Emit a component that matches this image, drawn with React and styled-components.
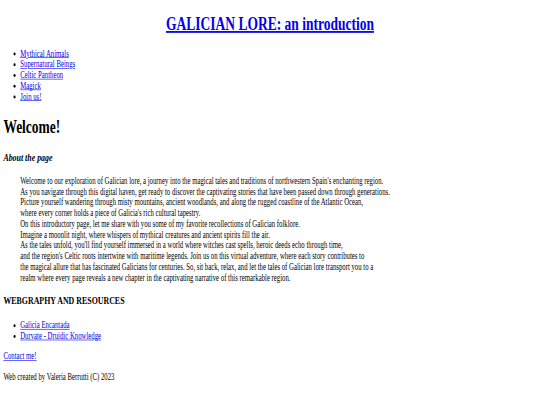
import React from 'react';
import styled, { createGlobalStyle } from 'styled-components';

//Global
const GlobalStyle = createGlobalStyle`
  html, body {
    margin: 0;
    padding: 0;
    overflow: hidden;
    background: #ffffff;
  }
`;

// the reference is a 1280px wide page squeezed into 540x405
const Viewport = styled.div`
  width: 540px;
  height: 405px;
  overflow: hidden;
`;

const Canvas = styled.div`
  display: flow-root;
  width: 1280px;
  min-height: 678px;
  transform: scale(0.421875, 0.597);
  transform-origin: 0 0;
  font-family: 'Liberation Serif', 'Times New Roman', serif;
  font-size: 16px;
  color: #000000;
`;

const PageBody = styled.div`
  margin: 8px;
`;

const Title = styled.h1`
  margin: 21.44px 0 23px;
  font-size: 32px;
  font-weight: bold;
  text-align: center;
`;

const Link = styled.a`
  color: #0000ee;
  text-decoration: underline;
`;

const LinkList = styled.ul`
  margin: ${(props) => props.top || '16px'} 0 16px;
  padding-left: 40px;
  list-style: disc;
`;

const Heading = styled.h1`
  margin: 21.44px 0;
  font-size: 32px;
  font-weight: bold;
`;

const SubHeading = styled.h3`
  margin: ${(props) => props.top || '18.72px'} 0 18.72px;
  font-size: 18.72px;
  font-weight: bold;
  font-style: ${(props) => (props.italic ? 'italic' : 'normal')};
`;

const Intro = styled.p`
  margin: 16px 40px;
`;

const Paragraph = styled.p`
  margin: 16px 0;
`;

const introLines = [
  "Welcome to our exploration of Galician lore, a journey into the magical tales and traditions of northwestern Spain's enchanting region.",
  'As you navigate through this digital haven, get ready to discover the captivating stories that have been passed down through generations.',
  'Picture yourself wandering through misty mountains, ancient woodlands, and along the rugged coastline of the Atlantic Ocean,',
  "where every corner holds a piece of Galicia's rich cultural tapestry.",
  'On this introductory page, let me share with you some of my favorite recollections of Galician folklore.',
  'Imagine a moonlit night, where whispers of mythical creatures and ancient spirits fill the air.',
  "As the tales unfold, you'll find yourself immersed in a world where witches cast spells, heroic deeds echo through time,",
  "and the region's Celtic roots intertwine with maritime legends. Join us on this virtual adventure, where each story contributes to",
  'the magical allure that has fascinated Galicians for centuries. So, sit back, relax, and let the tales of Galician lore transport you to a',
  'realm where every page reveals a new chapter in the captivating narrative of this remarkable region.',
];

const navItems = [
  'Mythical Animals',
  'Supernatural Beings',
  'Celtic Pantheon',
  'Magick',
  'Join us!',
];

const resources = ['Galicia Encantada', 'Durvate - Druidic Knowledge'];

export default function App() {
  return (
    <>
      <GlobalStyle />
      <Viewport>
        <Canvas>
          <PageBody>
            <Title>
              <Link href="#">GALICIAN LORE: an introduction</Link>
            </Title>
            <nav>
              <LinkList>
                {navItems.map((item) => (
                  <li key={item}>
                    <Link href="#">{item}</Link>
                  </li>
                ))}
              </LinkList>
            </nav>
            <Heading>Welcome!</Heading>
            <SubHeading italic top="23px">
              About the page
            </SubHeading>
            <Intro>
              {introLines.map((line, i) => (
                <React.Fragment key={i}>
                  {line}
                  {i < introLines.length - 1 && <br />}
                </React.Fragment>
              ))}
            </Intro>
            <SubHeading>WEBGRAPHY AND RESOURCES</SubHeading>
            <LinkList top="22px">
              {resources.map((item) => (
                <li key={item}>
                  <Link href="#">{item}</Link>
                </li>
              ))}
            </LinkList>
            <Paragraph>
              <Link href="#">Contact me!</Link>
            </Paragraph>
            <Paragraph>Web created by Valeria Berrutti (C) 2023</Paragraph>
          </PageBody>
        </Canvas>
      </Viewport>
    </>
  );
}
